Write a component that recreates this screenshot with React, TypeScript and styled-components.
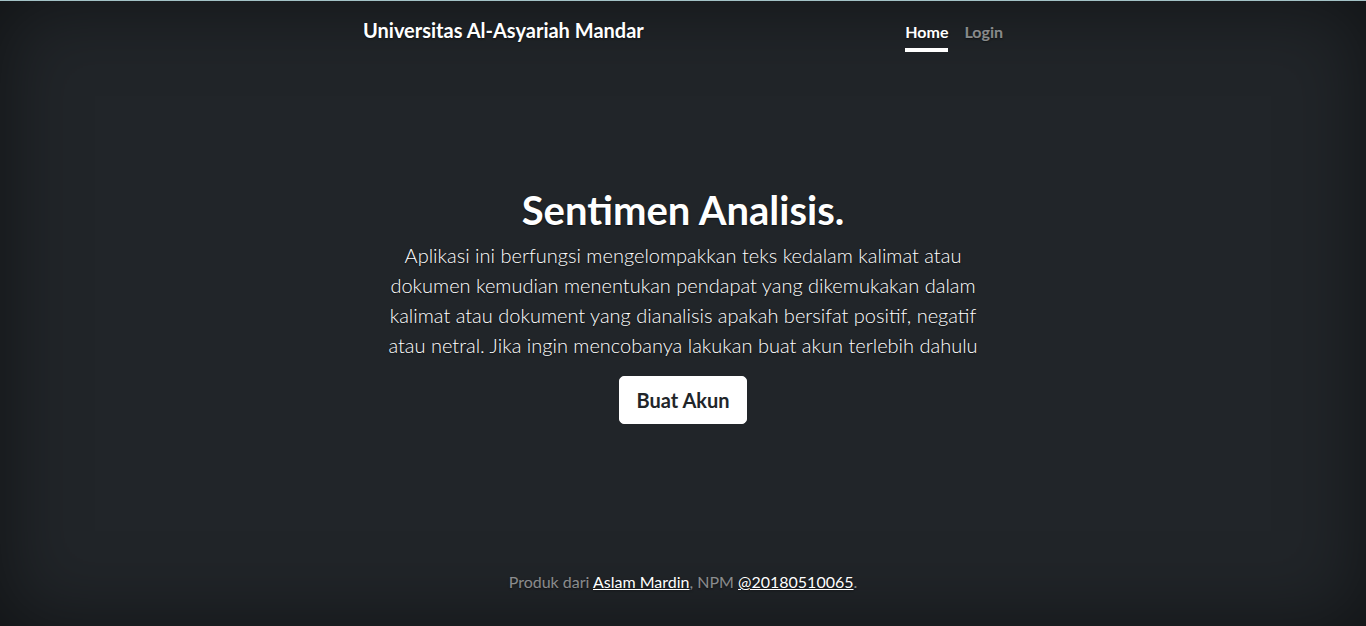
import * as React from 'react'
import styled, { createGlobalStyle } from 'styled-components'

const GlobalStyle = createGlobalStyle`
  * { box-sizing: border-box; }
  html, body { margin: 0; height: 100%; }
  body {
    background-color: #212529;
    color: #fff;
    font-family: Lato, "Open Sans", "Liberation Sans", sans-serif;
    font-size: 16px;
    line-height: 1.5;
  }
  #root { height: 100%; }
`

const Page = styled.div`
  min-height: 100vh;
  display: flex;
  justify-content: center;
  border-top: 1px solid #a3c2c6;
  box-shadow: inset 0 0 5rem rgba(0, 0, 0, 0.5);
  text-shadow: 0 0.05rem 0.1rem rgba(0, 0, 0, 0.5);
`

const Cover = styled.div`
  width: 100%;
  max-width: 42em;
  padding: 15px 16px 16px;
  display: flex;
  flex-direction: column;
`

const Header = styled.header`
  display: flex;
  justify-content: space-between;
  align-items: flex-start;
  margin-bottom: auto;
`

const Brand = styled.h3`
  margin: 0;
  font-size: 20px;
  font-weight: 700;
  line-height: 28px;
`

const Nav = styled.nav`
  display: flex;
`

const NavLink = styled.a<{ $active?: boolean }>`
  margin-left: 16px;
  padding: 4px 0;
  font-size: 16px;
  font-weight: 700;
  line-height: 24px;
  text-decoration: none;
  color: ${p => (p.$active ? '#fff' : 'rgba(255, 255, 255, 0.5)')};
  border-bottom: 4px solid ${p => (p.$active ? '#fff' : 'transparent')};
`

const Main = styled.main`
  padding: 0 16px 12px;
  text-align: center;
`

const Title = styled.h1`
  margin: 0 0 6px;
  font-size: 40px;
  font-weight: 700;
  line-height: 48px;
`

const Lead = styled.p`
  margin: 0 0 16px;
  font-size: 20px;
  font-weight: 300;
  line-height: 30px;
  color: #fff;
`

const Button = styled.a`
  display: inline-block;
  padding: 8px 16px;
  font-size: 20px;
  font-weight: 700;
  line-height: 30px;
  color: #212529;
  background: #fff;
  border: 1px solid #fff;
  border-radius: 5px;
  text-decoration: none;
  text-shadow: none;
`

const Footer = styled.footer`
  margin-top: auto;
  text-align: center;
  color: rgba(255, 255, 255, 0.5);
  font-size: 16px;

  p { margin: 0 0 16px; }
  a { color: #fff; text-decoration: underline; }
`

export default function App() {
  return (
    <>
      <GlobalStyle />
      <Page>
        <Cover>
          <Header>
            <Brand>Universitas Al-Asyariah Mandar</Brand>
            <Nav>
              <NavLink $active href="#">Home</NavLink>
              <NavLink href="#">Login</NavLink>
            </Nav>
          </Header>
          <Main>
            <Title>Sentimen Analisis.</Title>
            <Lead>
              Aplikasi ini berfungsi mengelompakkan teks kedalam kalimat atau dokumen kemudian
              menentukan pendapat yang dikemukakan dalam kalimat atau dokument yang dianalisis
              apakah bersifat positif, negatif atau netral. Jika ingin mencobanya lakukan buat
              akun terlebih dahulu
            </Lead>
            <Button href="#">Buat Akun</Button>
          </Main>
          <Footer>
            <p>
              Produk dari <a href="#">Aslam Mardin</a>, NPM <a href="#">@20180510065</a>.
            </p>
          </Footer>
        </Cover>
      </Page>
    </>
  )
}
